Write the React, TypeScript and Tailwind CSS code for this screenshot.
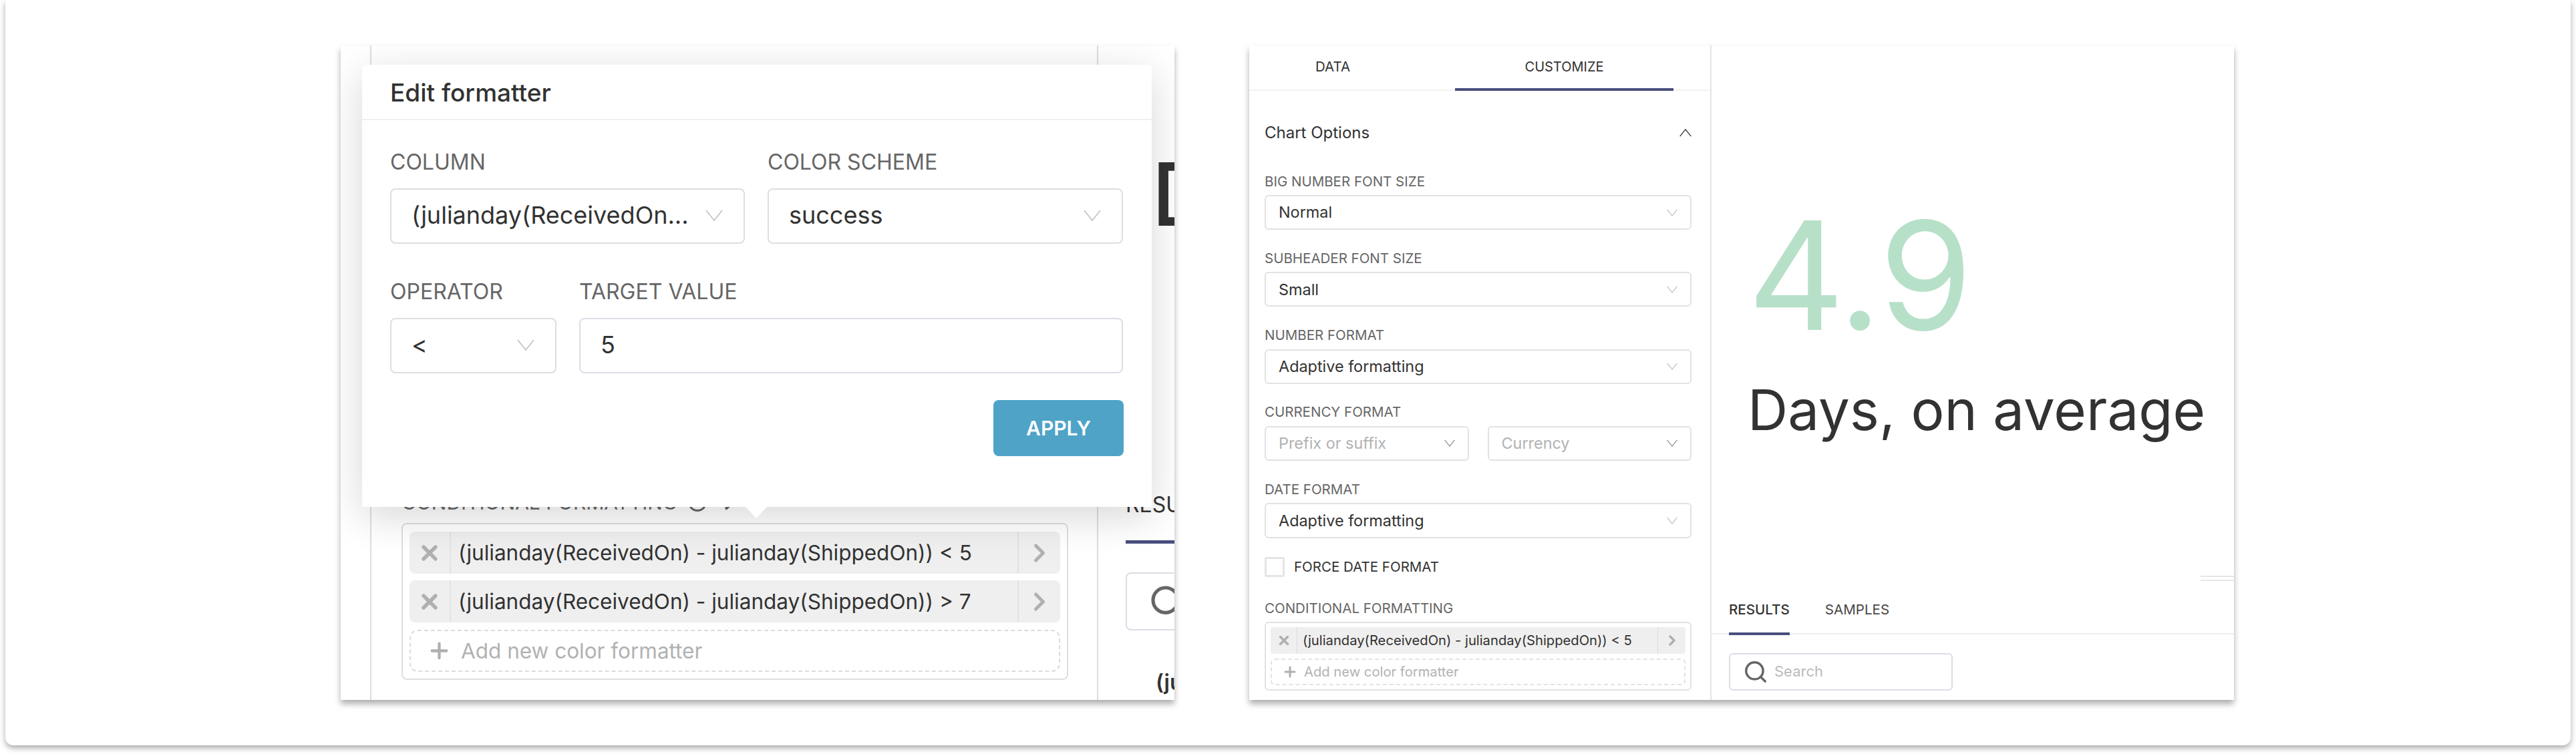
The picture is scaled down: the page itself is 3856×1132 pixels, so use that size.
import { Search, Plus, X, ChevronRight, Info } from "lucide-react";

function Caret({ className = "" }: { className?: string }) {
  return (
    <svg viewBox="0 0 26 17" className={`shrink-0 ${className}`} fill="none" stroke="currentColor" strokeWidth="1.8">
      <path d="M1 1 L13 16 L25 1" />
    </svg>
  );
}

function BigSelect({ value, className = "" }: { value: string; className?: string }) {
  return (
    <div className={`h-[83px] flex items-center justify-between pl-[30px] pr-[31px] pb-[3px] rounded-lg border-2 border-[#dedede] text-[36px] text-[#323232] ${className}`}>
      <span className="whitespace-nowrap">{value}</span>
      <Caret className="w-[26px] h-[17px] text-[#c4c4c4]" />
    </div>
  );
}

function SmallSelect({ value, muted = false, className = "h-[52px]" }: { value: string; muted?: boolean; className?: string }) {
  return (
    <div className={`flex items-center justify-between pl-[19px] pr-[19px] rounded-md border-2 border-[#e2e2e2] text-[23.4px] ${muted ? "text-[#b2b2b2]" : "text-[#323232]"} ${className}`}>
      <span className="whitespace-nowrap">{value}</span>
      <Caret className={`w-[16px] h-[11px] ${muted ? "text-[#888888]" : "text-[#bdbdbd]"}`} />
    </div>
  );
}

function Field({ label, children }: { label: string; children: React.ReactNode }) {
  return (
    <div className="flex flex-col">
      <div className="h-[24px] mb-[8px] flex items-center text-[20.5px] text-[#666666] whitespace-nowrap">{label}</div>
      {children}
    </div>
  );
}

function BigRule({ text }: { text: string }) {
  return (
    <div className="h-[63px] flex items-stretch rounded-lg bg-[#efefef] text-[31.5px] text-[#323232]">
      <div className="w-[62px] flex items-center justify-center border-r-2 border-[#e2e2e2]">
        <X size={36} strokeWidth={3.6} className="text-[#b0b0b0]" />
      </div>
      <div className="flex-1 flex items-center pl-[11px] whitespace-nowrap">{text}</div>
      <div className="w-[64px] flex items-center justify-center border-l-2 border-[#e2e2e2]">
        <ChevronRight size={44} strokeWidth={2.7} className="text-[#b0b0b0]" />
      </div>
    </div>
  );
}

function Modal() {
  return (
    <div className="absolute left-[32px] top-[29px] w-[1182px] h-[662px] bg-white rounded-t-md shadow-[0_14px_60px_rgba(0,0,0,0.16)]">
      <div className="h-[83px] flex items-center pl-[42px] pt-[3px] border-b-2 border-[#efefef] text-[37px] font-medium text-[#323232]">
        Edit formatter
      </div>
      <div className="px-[42px] pt-[43px]">
        <div className="grid grid-cols-[531px_532px] gap-x-[34px]">
          <div className="h-[40px] mb-[19px] flex items-center text-[32px] text-[#666666]">COLUMN</div>
          <div className="h-[40px] mb-[19px] flex items-center text-[32px] text-[#666666]">COLOR SCHEME</div>
          <BigSelect value="(julianday(ReceivedOn..." />
          <BigSelect value="success" />
        </div>
        <div className="grid grid-cols-[249px_814px] gap-x-[34px] mt-[52px]">
          <div className="h-[40px] mb-[19px] flex items-center text-[32px] text-[#666666]">OPERATOR</div>
          <div className="h-[40px] mb-[19px] flex items-center text-[32px] text-[#666666] whitespace-nowrap">TARGET VALUE</div>
          <BigSelect value="<" />
          <div className="h-[83px] flex items-center pl-[30px] pb-[3px] rounded-lg border-2 border-[#dcdde6] text-[36px] text-[#323232]">5</div>
        </div>
        <div className="flex justify-end mt-[40px]">
          <button className="w-[195px] h-[84px] rounded-lg bg-[#4fa3c7] text-white text-[30px] font-semibold">APPLY</button>
        </div>
      </div>
      {/* little arrow pointing at the formatter list */}
      <svg viewBox="0 0 34 18" className="absolute left-[573px] top-[661px] w-[34px] h-[18px]">
        <path d="M0 0 H34 L17 18 Z" fill="#ffffff" />
      </svg>
    </div>
  );
}

function LeftPanel() {
  return (
    <div className="relative w-[1248px] h-[980px] bg-white overflow-hidden flex shadow-[0_6px_9px_rgba(0,0,0,0.32)]">
      <div className="w-[46px] shrink-0 border-r-2 border-[#dddddd]" />
      <div className="w-[1088px] shrink-0 border-r-2 border-[#dddddd] flex flex-col justify-end pl-[45px] pr-[43px] pb-[30px]">
        <div className="flex items-center gap-[15px] h-[40px] mb-[11px] text-[30px] text-[#666666] whitespace-nowrap">
          CONDITIONAL FORMATTING
          <Info size={30} strokeWidth={2.4} />
          <ChevronRight size={36} strokeWidth={3} />
        </div>
        <div className="h-[235px] rounded-lg border-2 border-[#dedede] px-[10px] pt-[11px] flex flex-col gap-[10px]">
          <BigRule text="(julianday(ReceivedOn) - julianday(ShippedOn)) < 5" />
          <BigRule text="(julianday(ReceivedOn) - julianday(ShippedOn)) > 7" />
          <div className="h-[63px] mt-[1px] flex items-center gap-[14px] pl-[24px] rounded-xl border-2 border-dashed border-[#dcdcdc] text-[31.5px] text-[#b2b2b2]">
            <Plus size={37} strokeWidth={2.8} className="text-[#b0b0b0]" />
            Add new color formatter
          </div>
        </div>
      </div>
      <div className="flex-1 flex flex-col pl-[41px] overflow-hidden">
        <div className="h-[130px] mt-[158px] ml-[39px] flex items-center text-[130px] leading-none font-medium text-[#323232]">D</div>
        <div className="mt-[380px] h-[40px] flex items-center text-[32px] text-[#333333] whitespace-nowrap">RESULTS</div>
        <div className="mt-[33px] h-[5px] w-[200px] shrink-0 bg-[#484e7d]" />
        <div className="mt-[43px] h-[87px] w-[400px] shrink-0 flex items-center pl-[32px] rounded-lg border-2 border-[#dcdde6]">
          <Search size={56} strokeWidth={2.2} className="text-[#666666] shrink-0" />
        </div>
        <div className="mt-[58px] pl-[45px] h-[40px] leading-[40px] text-[32px] font-semibold text-[#323232] whitespace-nowrap">(julianday(ReceivedOn)</div>
      </div>
      <Modal />
    </div>
  );
}

function RightPanel() {
  return (
    <div className="w-[1474px] h-[980px] bg-white overflow-hidden flex shadow-[0_6px_9px_rgba(0,0,0,0.32)]">
      <div className="w-[692px] shrink-0 border-r-2 border-[#e4e4e4] flex flex-col">
        <div className="h-[68px] shrink-0 flex border-b-2 border-[#f1f1f1]">
          <div className="w-[250px] pb-[1px] flex items-center justify-center text-[20.5px] text-[#323232]">DATA</div>
          <div className="ml-[58px] w-[327px] -mb-[2px] pb-[1px] flex items-center justify-center border-b-4 border-[#484e7d] text-[20px] text-[#323232]">CUSTOMIZE</div>
        </div>
        <div className="pl-[23px] pr-[28px] pt-[48px]">
          <div className="h-[30px] flex items-center justify-between text-[24px] text-[#323232]">
            Chart Options
            <Caret className="w-[18px] h-[12px] rotate-180 text-[#323232]" />
          </div>
          <div className="mt-[46px] flex flex-col gap-[31.25px]">
            <Field label="BIG NUMBER FONT SIZE"><SmallSelect value="Normal" /></Field>
            <Field label="SUBHEADER FONT SIZE"><SmallSelect value="Small" /></Field>
            <Field label="NUMBER FORMAT"><SmallSelect value="Adaptive formatting" /></Field>
            <Field label="CURRENCY FORMAT">
              <div className="grid grid-cols-2 gap-x-[28px]">
                <SmallSelect value="Prefix or suffix" muted />
                <SmallSelect value="Currency" muted />
              </div>
            </Field>
            <Field label="DATE FORMAT"><SmallSelect value="Adaptive formatting" className="h-[53px]" /></Field>
          </div>
          <div className="mt-[28px] h-[30px] flex items-center gap-[14px] text-[20.5px] text-[#323232]">
            <div className="w-[30px] h-[30px] rounded-[3px] border-[3px] border-[#e4e4e4]" />
            FORCE DATE FORMAT
          </div>
          <div className="mt-[35px]">
            <Field label="CONDITIONAL FORMATTING">
              <div className="h-[103px] rounded-md border-2 border-[#e2e2e2] px-[7px] pt-[6px] flex flex-col gap-[7px]">
                <div className="h-[40px] flex items-stretch rounded bg-[#efefef] text-[20.2px] text-[#323232]">
                  <div className="w-[40px] flex items-center justify-center border-r border-[#dcdcdc]">
                    <X size={22} strokeWidth={3.8} className="text-[#b0b0b0]" />
                  </div>
                  <div className="flex-1 flex items-center pl-[8px] whitespace-nowrap">{"(julianday(ReceivedOn) - julianday(ShippedOn)) < 5"}</div>
                  <div className="w-[42px] flex items-center justify-center border-l border-[#dcdcdc]">
                    <ChevronRight size={24} strokeWidth={3.6} className="text-[#b0b0b0]" />
                  </div>
                </div>
                <div className="h-[40px] flex items-center gap-[9px] pl-[15px] rounded-md border-2 border-dashed border-[#e2e2e2] text-[20.2px] text-[#b2b2b2]">
                  <Plus size={24} strokeWidth={3} className="text-[#b0b0b0]" />
                  Add new color formatter
                </div>
              </div>
            </Field>
          </div>
        </div>
      </div>
      <div className="flex-1 flex flex-col min-w-0">
        <div className="h-[794px] shrink-0 flex flex-col pl-[54px]">
          <div className="mt-[232px] h-[225px] flex items-center text-[225px] leading-none tracking-[-2px] text-[#b7e0c8]">4.9</div>
          <div className="mt-[34px] h-[110px] flex items-center text-[83.5px] leading-none text-[#323232] whitespace-nowrap">Days, on average</div>
        </div>
        <div className="h-[8px] w-[50px] shrink-0 self-end border-y-2 border-[#e6e6e6]" />
        <div className="h-[80px] shrink-0 flex items-end gap-[53px] pl-[26px] border-b-2 border-[#eeeeee]">
          <div className="h-[51px] -mb-[3px] leading-[26px] border-b-4 border-[#484e7d] text-[20.6px] font-medium text-[#323232]">RESULTS</div>
          <div className="h-[51px] -mb-[3px] leading-[26px] text-[20.6px] text-[#484848]">SAMPLES</div>
        </div>
        <div className="mt-[28px] ml-[26px] w-[335px] h-[56px] flex items-center gap-[9px] pl-[19px] pb-[1px] rounded-md border-2 border-[#dcdde6] text-[22px] text-[#bbbbbb]">
          <Search size={38} strokeWidth={2.2} className="text-[#666666]" />
          Search
        </div>
      </div>
    </div>
  );
}

export default function App() {
  return (
    <div className="w-[3856px] h-[1132px] bg-white overflow-hidden font-['Inter',sans-serif]">
      <div className="ml-[8px] w-[3840px] h-[1116px] bg-white rounded-b-xl shadow-[0_4px_8px_rgba(0,0,0,0.34)] pt-[68px] pl-[502px] flex items-start gap-[112px]">
        <LeftPanel />
        <RightPanel />
      </div>
    </div>
  );
}
